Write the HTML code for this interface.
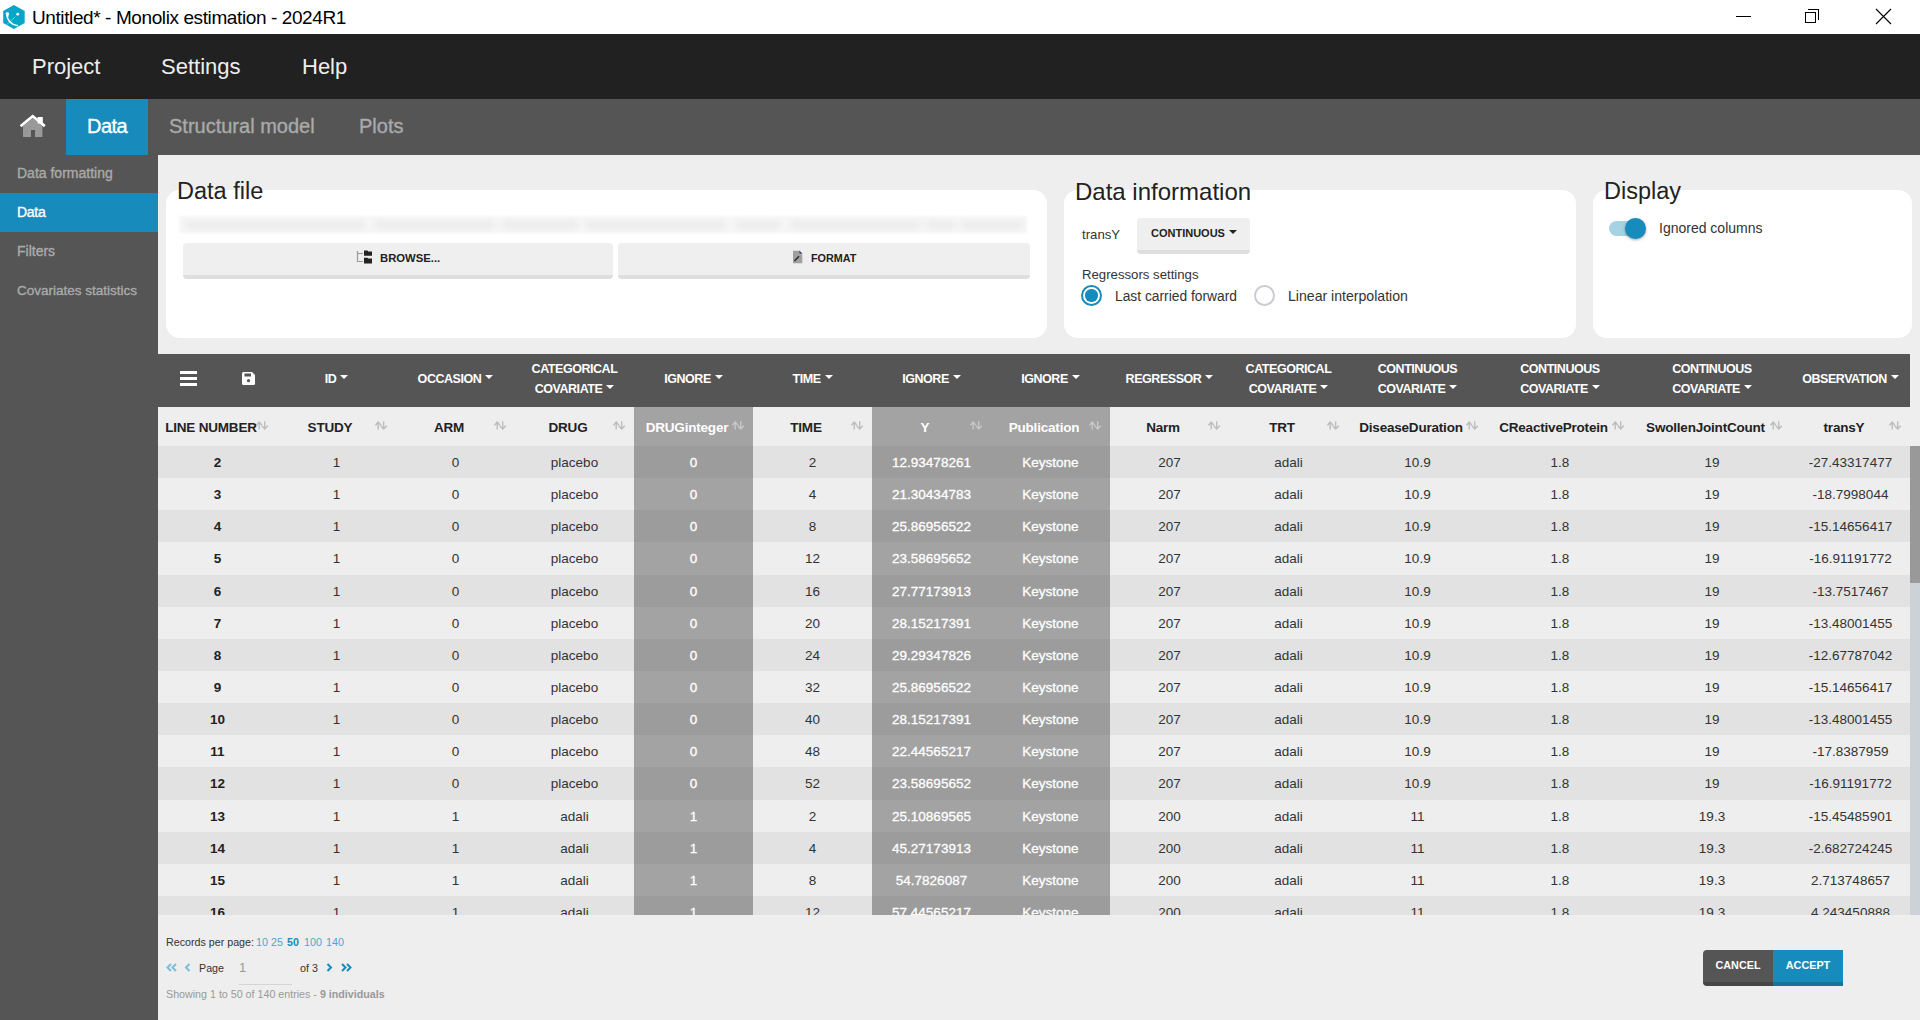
<!DOCTYPE html>
<html><head><meta charset="utf-8">
<style>
*{box-sizing:border-box;margin:0;padding:0}
html,body{width:1920px;height:1020px;overflow:hidden;background:#eeeeee;font-family:"Liberation Sans",sans-serif;position:relative}
.abs{position:absolute}
.sb{-webkit-text-stroke:0.35px currentColor}
.nw{white-space:nowrap}
#title{left:0;top:0;width:1920px;height:34px;background:#fff}
#menu{left:0;top:34px;width:1920px;height:65px;background:#212121}
#tabs{left:0;top:99px;width:1920px;height:56px;background:#555}
#side{left:0;top:155px;width:158px;height:865px;background:#555}
.card{background:#fff;border-radius:14px}
.h2{font-size:23.5px;color:#222;line-height:1;margin-top:1.5px}
.btn{background:#efefef;border-radius:4px;border-bottom:4px solid #dedede;font-weight:700;color:#222}
.td{font-size:13.5px;line-height:16px;text-align:center}
.th2{font-size:13.5px;font-weight:700;line-height:16px;text-align:center;letter-spacing:-0.2px}
.th1{font-size:12.5px;font-weight:700;line-height:14px;text-align:center;color:#fff;letter-spacing:-0.45px}
.car{display:inline-block;width:0;height:0;border-left:4px solid transparent;border-right:4px solid transparent;border-top:4px solid #fff;margin-left:4px;vertical-align:4px}
.ft{font-size:10.7px;line-height:14px}
.lk{color:#4aa8cf}

</style></head><body>
<!-- title bar -->
<div id="title" class="abs">
  <svg class="abs" style="left:3px;top:5px" width="22" height="24" viewBox="0 0 22 24">
    <polygon points="10.9,0 21.7,6.1 21.7,17.9 10.9,24 0.2,17.9 0.2,6.1" fill="#07a5c8"/>
    <path d="M3.6 7.8 Q4.2 19.2 15 20.8" stroke="#fff" stroke-width="1.5" fill="none"/>
    <path d="M2.6 8.6 Q4 6 6 8 L5.4 12 Z" fill="#fff"/>
    <line x1="4.4" y1="19" x2="12.4" y2="11.6" stroke="#fff" stroke-opacity="0.75" stroke-width="0.9" stroke-dasharray="1 0.6"/>
    <circle cx="14.7" cy="9.2" r="1.4" fill="#fff"/>
  </svg>
  <div class="abs nw" style="left:32px;top:7px;font-size:19px;letter-spacing:-0.4px;color:#000;line-height:22px">Untitled* - Monolix estimation - 2024R1</div>
  <div class="abs" style="left:1736px;top:16px;width:15px;height:1px;background:#000"></div>
  <div class="abs" style="left:1805px;top:12px;width:11px;height:11px;border:1px solid #000;background:#fff"></div>
  <div class="abs" style="left:1808px;top:9px;width:11px;height:11px;border-top:1px solid #000;border-right:1px solid #000"></div>
  <svg class="abs" style="left:1875px;top:8px" width="17" height="17" viewBox="0 0 17 17"><path d="M1 1L16 16M16 1L1 16" stroke="#000" stroke-width="1.1"/></svg>
</div>
<!-- menu -->
<div id="menu" class="abs">
  <div class="abs nw" style="left:32px;top:20px;font-size:22px;color:#eee;line-height:26px">Project</div>
  <div class="abs nw" style="left:161px;top:20px;font-size:22px;color:#eee;line-height:26px">Settings</div>
  <div class="abs nw" style="left:302px;top:20px;font-size:22px;color:#eee;line-height:26px">Help</div>
</div>
<!-- tabs -->
<div id="tabs" class="abs">
  <svg class="abs" style="left:20px;top:13.5px" width="26" height="26" viewBox="0 0 26 26">
    <path d="M3 13 L12.7 5.2 L22.4 13 V24 H15 V17 H11 V24 H3 Z" fill="#999"/>
    <rect x="17.6" y="4" width="5.2" height="6.5" fill="#fff"/>
    <path d="M1.6 12.3 L12.7 3.2 L23.8 12.3" stroke="#fff" stroke-width="2.6" fill="none" stroke-linecap="square"/>
  </svg>
  <div class="abs" style="left:66px;top:0;width:82px;height:56px;background:#178bbb"></div>
  <div class="abs nw sb" style="left:87px;top:15px;font-size:20px;letter-spacing:-0.5px;color:#fff;line-height:24px">Data</div>
  <div class="abs nw sb" style="left:169px;top:15px;font-size:20px;color:#aaa;line-height:24px">Structural model</div>
  <div class="abs nw sb" style="left:359px;top:15px;font-size:20px;color:#aaa;line-height:24px">Plots</div>
</div>
<!-- sidebar -->
<div id="side" class="abs">
  <div class="abs nw sb" style="left:17px;top:10px;font-size:14px;color:#aaa;line-height:17px">Data formatting</div>
  <div class="abs" style="left:0;top:38px;width:158px;height:39px;background:#178bbb"></div>
  <div class="abs nw sb" style="left:17px;top:49px;font-size:14px;letter-spacing:-0.3px;color:#fff;line-height:17px">Data</div>
  <div class="abs nw sb" style="left:17px;top:88px;font-size:14px;color:#aaa;line-height:17px">Filters</div>
  <div class="abs nw sb" style="left:17px;top:127px;font-size:13.5px;color:#aaa;line-height:17px">Covariates statistics</div>
</div>
<!-- CARDS -->
<div class="abs card" style="left:166px;top:190px;width:881px;height:148px"></div>
<div class="abs nw h2" style="left:177px;top:178px">Data file</div>
<!--FILEBAR-->
<div class="abs btn" style="left:183px;top:243px;width:430px;height:36px"></div>
<div class="abs btn" style="left:618px;top:243px;width:412px;height:36px"></div>

<div class="abs card" style="left:1064px;top:190px;width:512px;height:148px"></div>
<div class="abs nw h2" style="left:1075px;top:178px;font-size:24px">Data information</div>

<div class="abs card" style="left:1593px;top:190px;width:319px;height:148px"></div>
<div class="abs nw h2" style="left:1604px;top:178px">Display</div>



<div class="abs" style="left:179px;top:216px;width:848px;height:17px;background:#f7f7f7;filter:blur(0.8px)"></div>
<div class="abs" style="left:186px;top:221px;width:179px;height:8px;background:#ebebeb;filter:blur(3px)"></div>
<div class="abs" style="left:374px;top:221px;width:121px;height:8px;background:#ebebeb;filter:blur(3px)"></div>
<div class="abs" style="left:502px;top:221px;width:76px;height:8px;background:#ebebeb;filter:blur(3px)"></div>
<div class="abs" style="left:586px;top:221px;width:139px;height:8px;background:#ebebeb;filter:blur(3px)"></div>
<div class="abs" style="left:736px;top:221px;width:44px;height:8px;background:#ebebeb;filter:blur(3px)"></div>
<div class="abs" style="left:790px;top:221px;width:130px;height:8px;background:#ebebeb;filter:blur(3px)"></div>
<div class="abs" style="left:926px;top:221px;width:29px;height:8px;background:#ebebeb;filter:blur(3px)"></div>
<div class="abs" style="left:962px;top:221px;width:60px;height:8px;background:#ebebeb;filter:blur(3px)"></div>

<svg class="abs" style="left:356px;top:250px" width="17" height="15" viewBox="0 0 17 15">
 <path d="M1.5 1V11.5H7M1.5 3.5H7" stroke="#9a9a9a" stroke-width="1.2" fill="none"/>
 <path d="M8 0.6H11.5L12.2 1.4H16V5.8H8Z" fill="#222"/><path d="M8 7.8H11.5L12.2 8.6H16V13.4H8Z" fill="#222"/>
</svg>
<div class="abs nw" style="left:380px;top:252px;font-size:11.3px;font-weight:700;color:#222;line-height:13px">BROWSE...</div>
<svg class="abs" style="left:793px;top:250px" width="10" height="14" viewBox="0 0 10 14">
 <path d="M0 0.8H6.3V4.2H9.3V13.2H0Z" fill="#a0a0a0"/><path d="M6.3 0.5L9.5 3.8H6.3Z" fill="#3a2a50"/><path d="M1.5 11L6 6.2" stroke="#2a2a2a" stroke-width="1.5"/>
</svg>
<div class="abs nw" style="left:811px;top:252px;font-size:10.8px;font-weight:700;color:#222;line-height:13px">FORMAT</div>

<div class="abs nw" style="left:1082px;top:227px;font-size:13.2px;color:#333;line-height:16px">transY</div>
<div class="abs btn" style="left:1137px;top:218px;width:113px;height:36px;border-radius:4px"></div>
<div class="abs nw" style="left:1151px;top:227px;font-size:11px;font-weight:700;color:#222;line-height:13px">CONTINUOUS</div>
<div class="abs" style="left:1229px;top:230px;width:0;height:0;border-left:4px solid transparent;border-right:4px solid transparent;border-top:4px solid #222"></div>
<div class="abs nw" style="left:1082px;top:267px;font-size:13.2px;color:#333;line-height:16px">Regressors settings</div>
<div class="abs" style="left:1081px;top:285px;width:21px;height:21px;border-radius:50%;border:2.2px solid #178bbb;background:#fff"></div>
<div class="abs" style="left:1085.25px;top:289.25px;width:12.5px;height:12.5px;border-radius:50%;background:#178bbb"></div>
<div class="abs nw" style="left:1115px;top:288px;font-size:13.8px;color:#333;line-height:17px">Last carried forward</div>
<div class="abs" style="left:1254px;top:285px;width:21px;height:21px;border-radius:50%;border:2px solid #c8ccd2;background:#fff"></div>
<div class="abs nw" style="left:1288px;top:288px;font-size:14.1px;color:#333;line-height:17px">Linear interpolation</div>

<div class="abs" style="left:1609px;top:221px;width:30px;height:15px;border-radius:8px;background:#a6d3e3"></div>
<div class="abs" style="left:1625px;top:218px;width:21px;height:21px;border-radius:50%;background:#178bbb;box-shadow:0 1px 3px rgba(0,0,0,.35)"></div>
<div class="abs nw" style="left:1659px;top:220px;font-size:14px;color:#333;line-height:17px">Ignored columns</div>

<div class="abs" style="left:158px;top:354px;width:1752px;height:53px;background:#555"></div>
<div class="abs" style="left:158px;top:407px;width:1762px;height:39px;background:#eee"></div>
<div class="abs" style="left:158px;top:446px;width:1752px;height:469px;overflow:hidden">
<div class="abs" style="left:0;top:0.000px;width:1752px;height:32.143px;background:#e2e2e2"></div>
<div class="abs" style="left:0;top:32.143px;width:1752px;height:32.143px;background:#eeeeee"></div>
<div class="abs" style="left:0;top:64.286px;width:1752px;height:32.143px;background:#e2e2e2"></div>
<div class="abs" style="left:0;top:96.429px;width:1752px;height:32.143px;background:#eeeeee"></div>
<div class="abs" style="left:0;top:128.572px;width:1752px;height:32.143px;background:#e2e2e2"></div>
<div class="abs" style="left:0;top:160.715px;width:1752px;height:32.143px;background:#eeeeee"></div>
<div class="abs" style="left:0;top:192.858px;width:1752px;height:32.143px;background:#e2e2e2"></div>
<div class="abs" style="left:0;top:225.001px;width:1752px;height:32.143px;background:#eeeeee"></div>
<div class="abs" style="left:0;top:257.144px;width:1752px;height:32.143px;background:#e2e2e2"></div>
<div class="abs" style="left:0;top:289.287px;width:1752px;height:32.143px;background:#eeeeee"></div>
<div class="abs" style="left:0;top:321.430px;width:1752px;height:32.143px;background:#e2e2e2"></div>
<div class="abs" style="left:0;top:353.573px;width:1752px;height:32.143px;background:#eeeeee"></div>
<div class="abs" style="left:0;top:385.716px;width:1752px;height:32.143px;background:#e2e2e2"></div>
<div class="abs" style="left:0;top:417.859px;width:1752px;height:32.143px;background:#eeeeee"></div>
<div class="abs" style="left:0;top:450.002px;width:1752px;height:32.143px;background:#e2e2e2"></div>
<div class="abs" style="left:476px;top:0.000px;width:119px;height:32.143px;background:#9c9c9c"></div>
<div class="abs" style="left:476px;top:32.143px;width:119px;height:32.143px;background:#a3a3a3"></div>
<div class="abs" style="left:476px;top:64.286px;width:119px;height:32.143px;background:#9c9c9c"></div>
<div class="abs" style="left:476px;top:96.429px;width:119px;height:32.143px;background:#a3a3a3"></div>
<div class="abs" style="left:476px;top:128.572px;width:119px;height:32.143px;background:#9c9c9c"></div>
<div class="abs" style="left:476px;top:160.715px;width:119px;height:32.143px;background:#a3a3a3"></div>
<div class="abs" style="left:476px;top:192.858px;width:119px;height:32.143px;background:#9c9c9c"></div>
<div class="abs" style="left:476px;top:225.001px;width:119px;height:32.143px;background:#a3a3a3"></div>
<div class="abs" style="left:476px;top:257.144px;width:119px;height:32.143px;background:#9c9c9c"></div>
<div class="abs" style="left:476px;top:289.287px;width:119px;height:32.143px;background:#a3a3a3"></div>
<div class="abs" style="left:476px;top:321.430px;width:119px;height:32.143px;background:#9c9c9c"></div>
<div class="abs" style="left:476px;top:353.573px;width:119px;height:32.143px;background:#a3a3a3"></div>
<div class="abs" style="left:476px;top:385.716px;width:119px;height:32.143px;background:#9c9c9c"></div>
<div class="abs" style="left:476px;top:417.859px;width:119px;height:32.143px;background:#a3a3a3"></div>
<div class="abs" style="left:476px;top:450.002px;width:119px;height:32.143px;background:#9c9c9c"></div>
<div class="abs" style="left:714px;top:0.000px;width:119px;height:32.143px;background:#9c9c9c"></div>
<div class="abs" style="left:714px;top:32.143px;width:119px;height:32.143px;background:#a3a3a3"></div>
<div class="abs" style="left:714px;top:64.286px;width:119px;height:32.143px;background:#9c9c9c"></div>
<div class="abs" style="left:714px;top:96.429px;width:119px;height:32.143px;background:#a3a3a3"></div>
<div class="abs" style="left:714px;top:128.572px;width:119px;height:32.143px;background:#9c9c9c"></div>
<div class="abs" style="left:714px;top:160.715px;width:119px;height:32.143px;background:#a3a3a3"></div>
<div class="abs" style="left:714px;top:192.858px;width:119px;height:32.143px;background:#9c9c9c"></div>
<div class="abs" style="left:714px;top:225.001px;width:119px;height:32.143px;background:#a3a3a3"></div>
<div class="abs" style="left:714px;top:257.144px;width:119px;height:32.143px;background:#9c9c9c"></div>
<div class="abs" style="left:714px;top:289.287px;width:119px;height:32.143px;background:#a3a3a3"></div>
<div class="abs" style="left:714px;top:321.430px;width:119px;height:32.143px;background:#9c9c9c"></div>
<div class="abs" style="left:714px;top:353.573px;width:119px;height:32.143px;background:#a3a3a3"></div>
<div class="abs" style="left:714px;top:385.716px;width:119px;height:32.143px;background:#9c9c9c"></div>
<div class="abs" style="left:714px;top:417.859px;width:119px;height:32.143px;background:#a3a3a3"></div>
<div class="abs" style="left:714px;top:450.002px;width:119px;height:32.143px;background:#9c9c9c"></div>
<div class="abs" style="left:833px;top:0.000px;width:119px;height:32.143px;background:#9c9c9c"></div>
<div class="abs" style="left:833px;top:32.143px;width:119px;height:32.143px;background:#a3a3a3"></div>
<div class="abs" style="left:833px;top:64.286px;width:119px;height:32.143px;background:#9c9c9c"></div>
<div class="abs" style="left:833px;top:96.429px;width:119px;height:32.143px;background:#a3a3a3"></div>
<div class="abs" style="left:833px;top:128.572px;width:119px;height:32.143px;background:#9c9c9c"></div>
<div class="abs" style="left:833px;top:160.715px;width:119px;height:32.143px;background:#a3a3a3"></div>
<div class="abs" style="left:833px;top:192.858px;width:119px;height:32.143px;background:#9c9c9c"></div>
<div class="abs" style="left:833px;top:225.001px;width:119px;height:32.143px;background:#a3a3a3"></div>
<div class="abs" style="left:833px;top:257.144px;width:119px;height:32.143px;background:#9c9c9c"></div>
<div class="abs" style="left:833px;top:289.287px;width:119px;height:32.143px;background:#a3a3a3"></div>
<div class="abs" style="left:833px;top:321.430px;width:119px;height:32.143px;background:#9c9c9c"></div>
<div class="abs" style="left:833px;top:353.573px;width:119px;height:32.143px;background:#a3a3a3"></div>
<div class="abs" style="left:833px;top:385.716px;width:119px;height:32.143px;background:#9c9c9c"></div>
<div class="abs" style="left:833px;top:417.859px;width:119px;height:32.143px;background:#a3a3a3"></div>
<div class="abs" style="left:833px;top:450.002px;width:119px;height:32.143px;background:#9c9c9c"></div>
<div class="abs nw td" style="left:0px;top:9.000px;width:119px;color:#222;font-weight:700">2</div>
<div class="abs nw td" style="left:119px;top:9.000px;width:119px;color:#333;font-weight:400">1</div>
<div class="abs nw td" style="left:238px;top:9.000px;width:119px;color:#333;font-weight:400">0</div>
<div class="abs nw td" style="left:357px;top:9.000px;width:119px;color:#333;font-weight:400">placebo</div>
<div class="abs nw td" style="left:476px;top:9.000px;width:119px;color:#fff;font-weight:400;-webkit-text-stroke:0.3px #fff">0</div>
<div class="abs nw td" style="left:595px;top:9.000px;width:119px;color:#333;font-weight:400">2</div>
<div class="abs nw td" style="left:714px;top:9.000px;width:119px;color:#fff;font-weight:400;-webkit-text-stroke:0.3px #fff">12.93478261</div>
<div class="abs nw td" style="left:833px;top:9.000px;width:119px;color:#fff;font-weight:400;-webkit-text-stroke:0.3px #fff">Keystone</div>
<div class="abs nw td" style="left:952px;top:9.000px;width:119px;color:#333;font-weight:400">207</div>
<div class="abs nw td" style="left:1071px;top:9.000px;width:119px;color:#333;font-weight:400">adali</div>
<div class="abs nw td" style="left:1190px;top:9.000px;width:139px;color:#333;font-weight:400">10.9</div>
<div class="abs nw td" style="left:1329px;top:9.000px;width:146px;color:#333;font-weight:400">1.8</div>
<div class="abs nw td" style="left:1475px;top:9.000px;width:158px;color:#333;font-weight:400">19</div>
<div class="abs nw td" style="left:1633px;top:9.000px;width:119px;color:#333;font-weight:400">-27.43317477</div>
<div class="abs nw td" style="left:0px;top:41.143px;width:119px;color:#222;font-weight:700">3</div>
<div class="abs nw td" style="left:119px;top:41.143px;width:119px;color:#333;font-weight:400">1</div>
<div class="abs nw td" style="left:238px;top:41.143px;width:119px;color:#333;font-weight:400">0</div>
<div class="abs nw td" style="left:357px;top:41.143px;width:119px;color:#333;font-weight:400">placebo</div>
<div class="abs nw td" style="left:476px;top:41.143px;width:119px;color:#fff;font-weight:400;-webkit-text-stroke:0.3px #fff">0</div>
<div class="abs nw td" style="left:595px;top:41.143px;width:119px;color:#333;font-weight:400">4</div>
<div class="abs nw td" style="left:714px;top:41.143px;width:119px;color:#fff;font-weight:400;-webkit-text-stroke:0.3px #fff">21.30434783</div>
<div class="abs nw td" style="left:833px;top:41.143px;width:119px;color:#fff;font-weight:400;-webkit-text-stroke:0.3px #fff">Keystone</div>
<div class="abs nw td" style="left:952px;top:41.143px;width:119px;color:#333;font-weight:400">207</div>
<div class="abs nw td" style="left:1071px;top:41.143px;width:119px;color:#333;font-weight:400">adali</div>
<div class="abs nw td" style="left:1190px;top:41.143px;width:139px;color:#333;font-weight:400">10.9</div>
<div class="abs nw td" style="left:1329px;top:41.143px;width:146px;color:#333;font-weight:400">1.8</div>
<div class="abs nw td" style="left:1475px;top:41.143px;width:158px;color:#333;font-weight:400">19</div>
<div class="abs nw td" style="left:1633px;top:41.143px;width:119px;color:#333;font-weight:400">-18.7998044</div>
<div class="abs nw td" style="left:0px;top:73.286px;width:119px;color:#222;font-weight:700">4</div>
<div class="abs nw td" style="left:119px;top:73.286px;width:119px;color:#333;font-weight:400">1</div>
<div class="abs nw td" style="left:238px;top:73.286px;width:119px;color:#333;font-weight:400">0</div>
<div class="abs nw td" style="left:357px;top:73.286px;width:119px;color:#333;font-weight:400">placebo</div>
<div class="abs nw td" style="left:476px;top:73.286px;width:119px;color:#fff;font-weight:400;-webkit-text-stroke:0.3px #fff">0</div>
<div class="abs nw td" style="left:595px;top:73.286px;width:119px;color:#333;font-weight:400">8</div>
<div class="abs nw td" style="left:714px;top:73.286px;width:119px;color:#fff;font-weight:400;-webkit-text-stroke:0.3px #fff">25.86956522</div>
<div class="abs nw td" style="left:833px;top:73.286px;width:119px;color:#fff;font-weight:400;-webkit-text-stroke:0.3px #fff">Keystone</div>
<div class="abs nw td" style="left:952px;top:73.286px;width:119px;color:#333;font-weight:400">207</div>
<div class="abs nw td" style="left:1071px;top:73.286px;width:119px;color:#333;font-weight:400">adali</div>
<div class="abs nw td" style="left:1190px;top:73.286px;width:139px;color:#333;font-weight:400">10.9</div>
<div class="abs nw td" style="left:1329px;top:73.286px;width:146px;color:#333;font-weight:400">1.8</div>
<div class="abs nw td" style="left:1475px;top:73.286px;width:158px;color:#333;font-weight:400">19</div>
<div class="abs nw td" style="left:1633px;top:73.286px;width:119px;color:#333;font-weight:400">-15.14656417</div>
<div class="abs nw td" style="left:0px;top:105.429px;width:119px;color:#222;font-weight:700">5</div>
<div class="abs nw td" style="left:119px;top:105.429px;width:119px;color:#333;font-weight:400">1</div>
<div class="abs nw td" style="left:238px;top:105.429px;width:119px;color:#333;font-weight:400">0</div>
<div class="abs nw td" style="left:357px;top:105.429px;width:119px;color:#333;font-weight:400">placebo</div>
<div class="abs nw td" style="left:476px;top:105.429px;width:119px;color:#fff;font-weight:400;-webkit-text-stroke:0.3px #fff">0</div>
<div class="abs nw td" style="left:595px;top:105.429px;width:119px;color:#333;font-weight:400">12</div>
<div class="abs nw td" style="left:714px;top:105.429px;width:119px;color:#fff;font-weight:400;-webkit-text-stroke:0.3px #fff">23.58695652</div>
<div class="abs nw td" style="left:833px;top:105.429px;width:119px;color:#fff;font-weight:400;-webkit-text-stroke:0.3px #fff">Keystone</div>
<div class="abs nw td" style="left:952px;top:105.429px;width:119px;color:#333;font-weight:400">207</div>
<div class="abs nw td" style="left:1071px;top:105.429px;width:119px;color:#333;font-weight:400">adali</div>
<div class="abs nw td" style="left:1190px;top:105.429px;width:139px;color:#333;font-weight:400">10.9</div>
<div class="abs nw td" style="left:1329px;top:105.429px;width:146px;color:#333;font-weight:400">1.8</div>
<div class="abs nw td" style="left:1475px;top:105.429px;width:158px;color:#333;font-weight:400">19</div>
<div class="abs nw td" style="left:1633px;top:105.429px;width:119px;color:#333;font-weight:400">-16.91191772</div>
<div class="abs nw td" style="left:0px;top:137.572px;width:119px;color:#222;font-weight:700">6</div>
<div class="abs nw td" style="left:119px;top:137.572px;width:119px;color:#333;font-weight:400">1</div>
<div class="abs nw td" style="left:238px;top:137.572px;width:119px;color:#333;font-weight:400">0</div>
<div class="abs nw td" style="left:357px;top:137.572px;width:119px;color:#333;font-weight:400">placebo</div>
<div class="abs nw td" style="left:476px;top:137.572px;width:119px;color:#fff;font-weight:400;-webkit-text-stroke:0.3px #fff">0</div>
<div class="abs nw td" style="left:595px;top:137.572px;width:119px;color:#333;font-weight:400">16</div>
<div class="abs nw td" style="left:714px;top:137.572px;width:119px;color:#fff;font-weight:400;-webkit-text-stroke:0.3px #fff">27.77173913</div>
<div class="abs nw td" style="left:833px;top:137.572px;width:119px;color:#fff;font-weight:400;-webkit-text-stroke:0.3px #fff">Keystone</div>
<div class="abs nw td" style="left:952px;top:137.572px;width:119px;color:#333;font-weight:400">207</div>
<div class="abs nw td" style="left:1071px;top:137.572px;width:119px;color:#333;font-weight:400">adali</div>
<div class="abs nw td" style="left:1190px;top:137.572px;width:139px;color:#333;font-weight:400">10.9</div>
<div class="abs nw td" style="left:1329px;top:137.572px;width:146px;color:#333;font-weight:400">1.8</div>
<div class="abs nw td" style="left:1475px;top:137.572px;width:158px;color:#333;font-weight:400">19</div>
<div class="abs nw td" style="left:1633px;top:137.572px;width:119px;color:#333;font-weight:400">-13.7517467</div>
<div class="abs nw td" style="left:0px;top:169.715px;width:119px;color:#222;font-weight:700">7</div>
<div class="abs nw td" style="left:119px;top:169.715px;width:119px;color:#333;font-weight:400">1</div>
<div class="abs nw td" style="left:238px;top:169.715px;width:119px;color:#333;font-weight:400">0</div>
<div class="abs nw td" style="left:357px;top:169.715px;width:119px;color:#333;font-weight:400">placebo</div>
<div class="abs nw td" style="left:476px;top:169.715px;width:119px;color:#fff;font-weight:400;-webkit-text-stroke:0.3px #fff">0</div>
<div class="abs nw td" style="left:595px;top:169.715px;width:119px;color:#333;font-weight:400">20</div>
<div class="abs nw td" style="left:714px;top:169.715px;width:119px;color:#fff;font-weight:400;-webkit-text-stroke:0.3px #fff">28.15217391</div>
<div class="abs nw td" style="left:833px;top:169.715px;width:119px;color:#fff;font-weight:400;-webkit-text-stroke:0.3px #fff">Keystone</div>
<div class="abs nw td" style="left:952px;top:169.715px;width:119px;color:#333;font-weight:400">207</div>
<div class="abs nw td" style="left:1071px;top:169.715px;width:119px;color:#333;font-weight:400">adali</div>
<div class="abs nw td" style="left:1190px;top:169.715px;width:139px;color:#333;font-weight:400">10.9</div>
<div class="abs nw td" style="left:1329px;top:169.715px;width:146px;color:#333;font-weight:400">1.8</div>
<div class="abs nw td" style="left:1475px;top:169.715px;width:158px;color:#333;font-weight:400">19</div>
<div class="abs nw td" style="left:1633px;top:169.715px;width:119px;color:#333;font-weight:400">-13.48001455</div>
<div class="abs nw td" style="left:0px;top:201.858px;width:119px;color:#222;font-weight:700">8</div>
<div class="abs nw td" style="left:119px;top:201.858px;width:119px;color:#333;font-weight:400">1</div>
<div class="abs nw td" style="left:238px;top:201.858px;width:119px;color:#333;font-weight:400">0</div>
<div class="abs nw td" style="left:357px;top:201.858px;width:119px;color:#333;font-weight:400">placebo</div>
<div class="abs nw td" style="left:476px;top:201.858px;width:119px;color:#fff;font-weight:400;-webkit-text-stroke:0.3px #fff">0</div>
<div class="abs nw td" style="left:595px;top:201.858px;width:119px;color:#333;font-weight:400">24</div>
<div class="abs nw td" style="left:714px;top:201.858px;width:119px;color:#fff;font-weight:400;-webkit-text-stroke:0.3px #fff">29.29347826</div>
<div class="abs nw td" style="left:833px;top:201.858px;width:119px;color:#fff;font-weight:400;-webkit-text-stroke:0.3px #fff">Keystone</div>
<div class="abs nw td" style="left:952px;top:201.858px;width:119px;color:#333;font-weight:400">207</div>
<div class="abs nw td" style="left:1071px;top:201.858px;width:119px;color:#333;font-weight:400">adali</div>
<div class="abs nw td" style="left:1190px;top:201.858px;width:139px;color:#333;font-weight:400">10.9</div>
<div class="abs nw td" style="left:1329px;top:201.858px;width:146px;color:#333;font-weight:400">1.8</div>
<div class="abs nw td" style="left:1475px;top:201.858px;width:158px;color:#333;font-weight:400">19</div>
<div class="abs nw td" style="left:1633px;top:201.858px;width:119px;color:#333;font-weight:400">-12.67787042</div>
<div class="abs nw td" style="left:0px;top:234.001px;width:119px;color:#222;font-weight:700">9</div>
<div class="abs nw td" style="left:119px;top:234.001px;width:119px;color:#333;font-weight:400">1</div>
<div class="abs nw td" style="left:238px;top:234.001px;width:119px;color:#333;font-weight:400">0</div>
<div class="abs nw td" style="left:357px;top:234.001px;width:119px;color:#333;font-weight:400">placebo</div>
<div class="abs nw td" style="left:476px;top:234.001px;width:119px;color:#fff;font-weight:400;-webkit-text-stroke:0.3px #fff">0</div>
<div class="abs nw td" style="left:595px;top:234.001px;width:119px;color:#333;font-weight:400">32</div>
<div class="abs nw td" style="left:714px;top:234.001px;width:119px;color:#fff;font-weight:400;-webkit-text-stroke:0.3px #fff">25.86956522</div>
<div class="abs nw td" style="left:833px;top:234.001px;width:119px;color:#fff;font-weight:400;-webkit-text-stroke:0.3px #fff">Keystone</div>
<div class="abs nw td" style="left:952px;top:234.001px;width:119px;color:#333;font-weight:400">207</div>
<div class="abs nw td" style="left:1071px;top:234.001px;width:119px;color:#333;font-weight:400">adali</div>
<div class="abs nw td" style="left:1190px;top:234.001px;width:139px;color:#333;font-weight:400">10.9</div>
<div class="abs nw td" style="left:1329px;top:234.001px;width:146px;color:#333;font-weight:400">1.8</div>
<div class="abs nw td" style="left:1475px;top:234.001px;width:158px;color:#333;font-weight:400">19</div>
<div class="abs nw td" style="left:1633px;top:234.001px;width:119px;color:#333;font-weight:400">-15.14656417</div>
<div class="abs nw td" style="left:0px;top:266.144px;width:119px;color:#222;font-weight:700">10</div>
<div class="abs nw td" style="left:119px;top:266.144px;width:119px;color:#333;font-weight:400">1</div>
<div class="abs nw td" style="left:238px;top:266.144px;width:119px;color:#333;font-weight:400">0</div>
<div class="abs nw td" style="left:357px;top:266.144px;width:119px;color:#333;font-weight:400">placebo</div>
<div class="abs nw td" style="left:476px;top:266.144px;width:119px;color:#fff;font-weight:400;-webkit-text-stroke:0.3px #fff">0</div>
<div class="abs nw td" style="left:595px;top:266.144px;width:119px;color:#333;font-weight:400">40</div>
<div class="abs nw td" style="left:714px;top:266.144px;width:119px;color:#fff;font-weight:400;-webkit-text-stroke:0.3px #fff">28.15217391</div>
<div class="abs nw td" style="left:833px;top:266.144px;width:119px;color:#fff;font-weight:400;-webkit-text-stroke:0.3px #fff">Keystone</div>
<div class="abs nw td" style="left:952px;top:266.144px;width:119px;color:#333;font-weight:400">207</div>
<div class="abs nw td" style="left:1071px;top:266.144px;width:119px;color:#333;font-weight:400">adali</div>
<div class="abs nw td" style="left:1190px;top:266.144px;width:139px;color:#333;font-weight:400">10.9</div>
<div class="abs nw td" style="left:1329px;top:266.144px;width:146px;color:#333;font-weight:400">1.8</div>
<div class="abs nw td" style="left:1475px;top:266.144px;width:158px;color:#333;font-weight:400">19</div>
<div class="abs nw td" style="left:1633px;top:266.144px;width:119px;color:#333;font-weight:400">-13.48001455</div>
<div class="abs nw td" style="left:0px;top:298.287px;width:119px;color:#222;font-weight:700">11</div>
<div class="abs nw td" style="left:119px;top:298.287px;width:119px;color:#333;font-weight:400">1</div>
<div class="abs nw td" style="left:238px;top:298.287px;width:119px;color:#333;font-weight:400">0</div>
<div class="abs nw td" style="left:357px;top:298.287px;width:119px;color:#333;font-weight:400">placebo</div>
<div class="abs nw td" style="left:476px;top:298.287px;width:119px;color:#fff;font-weight:400;-webkit-text-stroke:0.3px #fff">0</div>
<div class="abs nw td" style="left:595px;top:298.287px;width:119px;color:#333;font-weight:400">48</div>
<div class="abs nw td" style="left:714px;top:298.287px;width:119px;color:#fff;font-weight:400;-webkit-text-stroke:0.3px #fff">22.44565217</div>
<div class="abs nw td" style="left:833px;top:298.287px;width:119px;color:#fff;font-weight:400;-webkit-text-stroke:0.3px #fff">Keystone</div>
<div class="abs nw td" style="left:952px;top:298.287px;width:119px;color:#333;font-weight:400">207</div>
<div class="abs nw td" style="left:1071px;top:298.287px;width:119px;color:#333;font-weight:400">adali</div>
<div class="abs nw td" style="left:1190px;top:298.287px;width:139px;color:#333;font-weight:400">10.9</div>
<div class="abs nw td" style="left:1329px;top:298.287px;width:146px;color:#333;font-weight:400">1.8</div>
<div class="abs nw td" style="left:1475px;top:298.287px;width:158px;color:#333;font-weight:400">19</div>
<div class="abs nw td" style="left:1633px;top:298.287px;width:119px;color:#333;font-weight:400">-17.8387959</div>
<div class="abs nw td" style="left:0px;top:330.430px;width:119px;color:#222;font-weight:700">12</div>
<div class="abs nw td" style="left:119px;top:330.430px;width:119px;color:#333;font-weight:400">1</div>
<div class="abs nw td" style="left:238px;top:330.430px;width:119px;color:#333;font-weight:400">0</div>
<div class="abs nw td" style="left:357px;top:330.430px;width:119px;color:#333;font-weight:400">placebo</div>
<div class="abs nw td" style="left:476px;top:330.430px;width:119px;color:#fff;font-weight:400;-webkit-text-stroke:0.3px #fff">0</div>
<div class="abs nw td" style="left:595px;top:330.430px;width:119px;color:#333;font-weight:400">52</div>
<div class="abs nw td" style="left:714px;top:330.430px;width:119px;color:#fff;font-weight:400;-webkit-text-stroke:0.3px #fff">23.58695652</div>
<div class="abs nw td" style="left:833px;top:330.430px;width:119px;color:#fff;font-weight:400;-webkit-text-stroke:0.3px #fff">Keystone</div>
<div class="abs nw td" style="left:952px;top:330.430px;width:119px;color:#333;font-weight:400">207</div>
<div class="abs nw td" style="left:1071px;top:330.430px;width:119px;color:#333;font-weight:400">adali</div>
<div class="abs nw td" style="left:1190px;top:330.430px;width:139px;color:#333;font-weight:400">10.9</div>
<div class="abs nw td" style="left:1329px;top:330.430px;width:146px;color:#333;font-weight:400">1.8</div>
<div class="abs nw td" style="left:1475px;top:330.430px;width:158px;color:#333;font-weight:400">19</div>
<div class="abs nw td" style="left:1633px;top:330.430px;width:119px;color:#333;font-weight:400">-16.91191772</div>
<div class="abs nw td" style="left:0px;top:362.573px;width:119px;color:#222;font-weight:700">13</div>
<div class="abs nw td" style="left:119px;top:362.573px;width:119px;color:#333;font-weight:400">1</div>
<div class="abs nw td" style="left:238px;top:362.573px;width:119px;color:#333;font-weight:400">1</div>
<div class="abs nw td" style="left:357px;top:362.573px;width:119px;color:#333;font-weight:400">adali</div>
<div class="abs nw td" style="left:476px;top:362.573px;width:119px;color:#fff;font-weight:400;-webkit-text-stroke:0.3px #fff">1</div>
<div class="abs nw td" style="left:595px;top:362.573px;width:119px;color:#333;font-weight:400">2</div>
<div class="abs nw td" style="left:714px;top:362.573px;width:119px;color:#fff;font-weight:400;-webkit-text-stroke:0.3px #fff">25.10869565</div>
<div class="abs nw td" style="left:833px;top:362.573px;width:119px;color:#fff;font-weight:400;-webkit-text-stroke:0.3px #fff">Keystone</div>
<div class="abs nw td" style="left:952px;top:362.573px;width:119px;color:#333;font-weight:400">200</div>
<div class="abs nw td" style="left:1071px;top:362.573px;width:119px;color:#333;font-weight:400">adali</div>
<div class="abs nw td" style="left:1190px;top:362.573px;width:139px;color:#333;font-weight:400">11</div>
<div class="abs nw td" style="left:1329px;top:362.573px;width:146px;color:#333;font-weight:400">1.8</div>
<div class="abs nw td" style="left:1475px;top:362.573px;width:158px;color:#333;font-weight:400">19.3</div>
<div class="abs nw td" style="left:1633px;top:362.573px;width:119px;color:#333;font-weight:400">-15.45485901</div>
<div class="abs nw td" style="left:0px;top:394.716px;width:119px;color:#222;font-weight:700">14</div>
<div class="abs nw td" style="left:119px;top:394.716px;width:119px;color:#333;font-weight:400">1</div>
<div class="abs nw td" style="left:238px;top:394.716px;width:119px;color:#333;font-weight:400">1</div>
<div class="abs nw td" style="left:357px;top:394.716px;width:119px;color:#333;font-weight:400">adali</div>
<div class="abs nw td" style="left:476px;top:394.716px;width:119px;color:#fff;font-weight:400;-webkit-text-stroke:0.3px #fff">1</div>
<div class="abs nw td" style="left:595px;top:394.716px;width:119px;color:#333;font-weight:400">4</div>
<div class="abs nw td" style="left:714px;top:394.716px;width:119px;color:#fff;font-weight:400;-webkit-text-stroke:0.3px #fff">45.27173913</div>
<div class="abs nw td" style="left:833px;top:394.716px;width:119px;color:#fff;font-weight:400;-webkit-text-stroke:0.3px #fff">Keystone</div>
<div class="abs nw td" style="left:952px;top:394.716px;width:119px;color:#333;font-weight:400">200</div>
<div class="abs nw td" style="left:1071px;top:394.716px;width:119px;color:#333;font-weight:400">adali</div>
<div class="abs nw td" style="left:1190px;top:394.716px;width:139px;color:#333;font-weight:400">11</div>
<div class="abs nw td" style="left:1329px;top:394.716px;width:146px;color:#333;font-weight:400">1.8</div>
<div class="abs nw td" style="left:1475px;top:394.716px;width:158px;color:#333;font-weight:400">19.3</div>
<div class="abs nw td" style="left:1633px;top:394.716px;width:119px;color:#333;font-weight:400">-2.682724245</div>
<div class="abs nw td" style="left:0px;top:426.859px;width:119px;color:#222;font-weight:700">15</div>
<div class="abs nw td" style="left:119px;top:426.859px;width:119px;color:#333;font-weight:400">1</div>
<div class="abs nw td" style="left:238px;top:426.859px;width:119px;color:#333;font-weight:400">1</div>
<div class="abs nw td" style="left:357px;top:426.859px;width:119px;color:#333;font-weight:400">adali</div>
<div class="abs nw td" style="left:476px;top:426.859px;width:119px;color:#fff;font-weight:400;-webkit-text-stroke:0.3px #fff">1</div>
<div class="abs nw td" style="left:595px;top:426.859px;width:119px;color:#333;font-weight:400">8</div>
<div class="abs nw td" style="left:714px;top:426.859px;width:119px;color:#fff;font-weight:400;-webkit-text-stroke:0.3px #fff">54.7826087</div>
<div class="abs nw td" style="left:833px;top:426.859px;width:119px;color:#fff;font-weight:400;-webkit-text-stroke:0.3px #fff">Keystone</div>
<div class="abs nw td" style="left:952px;top:426.859px;width:119px;color:#333;font-weight:400">200</div>
<div class="abs nw td" style="left:1071px;top:426.859px;width:119px;color:#333;font-weight:400">adali</div>
<div class="abs nw td" style="left:1190px;top:426.859px;width:139px;color:#333;font-weight:400">11</div>
<div class="abs nw td" style="left:1329px;top:426.859px;width:146px;color:#333;font-weight:400">1.8</div>
<div class="abs nw td" style="left:1475px;top:426.859px;width:158px;color:#333;font-weight:400">19.3</div>
<div class="abs nw td" style="left:1633px;top:426.859px;width:119px;color:#333;font-weight:400">2.713748657</div>
<div class="abs nw td" style="left:0px;top:459.002px;width:119px;color:#222;font-weight:700">16</div>
<div class="abs nw td" style="left:119px;top:459.002px;width:119px;color:#333;font-weight:400">1</div>
<div class="abs nw td" style="left:238px;top:459.002px;width:119px;color:#333;font-weight:400">1</div>
<div class="abs nw td" style="left:357px;top:459.002px;width:119px;color:#333;font-weight:400">adali</div>
<div class="abs nw td" style="left:476px;top:459.002px;width:119px;color:#fff;font-weight:400;-webkit-text-stroke:0.3px #fff">1</div>
<div class="abs nw td" style="left:595px;top:459.002px;width:119px;color:#333;font-weight:400">12</div>
<div class="abs nw td" style="left:714px;top:459.002px;width:119px;color:#fff;font-weight:400;-webkit-text-stroke:0.3px #fff">57.44565217</div>
<div class="abs nw td" style="left:833px;top:459.002px;width:119px;color:#fff;font-weight:400;-webkit-text-stroke:0.3px #fff">Keystone</div>
<div class="abs nw td" style="left:952px;top:459.002px;width:119px;color:#333;font-weight:400">200</div>
<div class="abs nw td" style="left:1071px;top:459.002px;width:119px;color:#333;font-weight:400">adali</div>
<div class="abs nw td" style="left:1190px;top:459.002px;width:139px;color:#333;font-weight:400">11</div>
<div class="abs nw td" style="left:1329px;top:459.002px;width:146px;color:#333;font-weight:400">1.8</div>
<div class="abs nw td" style="left:1475px;top:459.002px;width:158px;color:#333;font-weight:400">19.3</div>
<div class="abs nw td" style="left:1633px;top:459.002px;width:119px;color:#333;font-weight:400">4.243450888</div>
</div>
<div class="abs" style="left:634px;top:407px;width:119px;height:39px;background:#a3a3a3"></div>
<div class="abs" style="left:872px;top:407px;width:119px;height:39px;background:#a3a3a3"></div>
<div class="abs" style="left:991px;top:407px;width:119px;height:39px;background:#a3a3a3"></div>
<div class="abs nw th2" style="left:158px;top:419.5px;width:106px;color:#222">LINE NUMBER</div>
<svg class="abs" style="left:256px;top:420.5px" width="13" height="9" viewBox="0 0 13 9"><path d="M3.2 8.5V1M0.5 4.3L3.2 1L5.9 4.3M8.7 0.3V8M5.8 4.8L8.7 8L11.8 4.8" stroke="#bdbdbd" stroke-width="1.4" fill="none"/></svg>
<div class="abs nw th2" style="left:277px;top:419.5px;width:106px;color:#222">STUDY</div>
<svg class="abs" style="left:375px;top:420.5px" width="13" height="9" viewBox="0 0 13 9"><path d="M3.2 8.5V1M0.5 4.3L3.2 1L5.9 4.3M8.7 0.3V8M5.8 4.8L8.7 8L11.8 4.8" stroke="#bdbdbd" stroke-width="1.4" fill="none"/></svg>
<div class="abs nw th2" style="left:396px;top:419.5px;width:106px;color:#222">ARM</div>
<svg class="abs" style="left:494px;top:420.5px" width="13" height="9" viewBox="0 0 13 9"><path d="M3.2 8.5V1M0.5 4.3L3.2 1L5.9 4.3M8.7 0.3V8M5.8 4.8L8.7 8L11.8 4.8" stroke="#bdbdbd" stroke-width="1.4" fill="none"/></svg>
<div class="abs nw th2" style="left:515px;top:419.5px;width:106px;color:#222">DRUG</div>
<svg class="abs" style="left:613px;top:420.5px" width="13" height="9" viewBox="0 0 13 9"><path d="M3.2 8.5V1M0.5 4.3L3.2 1L5.9 4.3M8.7 0.3V8M5.8 4.8L8.7 8L11.8 4.8" stroke="#bdbdbd" stroke-width="1.4" fill="none"/></svg>
<div class="abs nw th2" style="left:634px;top:419.5px;width:106px;color:#fff">DRUGinteger</div>
<svg class="abs" style="left:732px;top:420.5px" width="13" height="9" viewBox="0 0 13 9"><path d="M3.2 8.5V1M0.5 4.3L3.2 1L5.9 4.3M8.7 0.3V8M5.8 4.8L8.7 8L11.8 4.8" stroke="#c8c8c8" stroke-width="1.4" fill="none"/></svg>
<div class="abs nw th2" style="left:753px;top:419.5px;width:106px;color:#222">TIME</div>
<svg class="abs" style="left:851px;top:420.5px" width="13" height="9" viewBox="0 0 13 9"><path d="M3.2 8.5V1M0.5 4.3L3.2 1L5.9 4.3M8.7 0.3V8M5.8 4.8L8.7 8L11.8 4.8" stroke="#bdbdbd" stroke-width="1.4" fill="none"/></svg>
<div class="abs nw th2" style="left:872px;top:419.5px;width:106px;color:#fff">Y</div>
<svg class="abs" style="left:970px;top:420.5px" width="13" height="9" viewBox="0 0 13 9"><path d="M3.2 8.5V1M0.5 4.3L3.2 1L5.9 4.3M8.7 0.3V8M5.8 4.8L8.7 8L11.8 4.8" stroke="#c8c8c8" stroke-width="1.4" fill="none"/></svg>
<div class="abs nw th2" style="left:991px;top:419.5px;width:106px;color:#fff">Publication</div>
<svg class="abs" style="left:1089px;top:420.5px" width="13" height="9" viewBox="0 0 13 9"><path d="M3.2 8.5V1M0.5 4.3L3.2 1L5.9 4.3M8.7 0.3V8M5.8 4.8L8.7 8L11.8 4.8" stroke="#c8c8c8" stroke-width="1.4" fill="none"/></svg>
<div class="abs nw th2" style="left:1110px;top:419.5px;width:106px;color:#222">Narm</div>
<svg class="abs" style="left:1208px;top:420.5px" width="13" height="9" viewBox="0 0 13 9"><path d="M3.2 8.5V1M0.5 4.3L3.2 1L5.9 4.3M8.7 0.3V8M5.8 4.8L8.7 8L11.8 4.8" stroke="#bdbdbd" stroke-width="1.4" fill="none"/></svg>
<div class="abs nw th2" style="left:1229px;top:419.5px;width:106px;color:#222">TRT</div>
<svg class="abs" style="left:1327px;top:420.5px" width="13" height="9" viewBox="0 0 13 9"><path d="M3.2 8.5V1M0.5 4.3L3.2 1L5.9 4.3M8.7 0.3V8M5.8 4.8L8.7 8L11.8 4.8" stroke="#bdbdbd" stroke-width="1.4" fill="none"/></svg>
<div class="abs nw th2" style="left:1348px;top:419.5px;width:126px;color:#222">DiseaseDuration</div>
<svg class="abs" style="left:1466px;top:420.5px" width="13" height="9" viewBox="0 0 13 9"><path d="M3.2 8.5V1M0.5 4.3L3.2 1L5.9 4.3M8.7 0.3V8M5.8 4.8L8.7 8L11.8 4.8" stroke="#bdbdbd" stroke-width="1.4" fill="none"/></svg>
<div class="abs nw th2" style="left:1487px;top:419.5px;width:133px;color:#222">CReactiveProtein</div>
<svg class="abs" style="left:1612px;top:420.5px" width="13" height="9" viewBox="0 0 13 9"><path d="M3.2 8.5V1M0.5 4.3L3.2 1L5.9 4.3M8.7 0.3V8M5.8 4.8L8.7 8L11.8 4.8" stroke="#bdbdbd" stroke-width="1.4" fill="none"/></svg>
<div class="abs nw th2" style="left:1633px;top:419.5px;width:145px;color:#222">SwollenJointCount</div>
<svg class="abs" style="left:1770px;top:420.5px" width="13" height="9" viewBox="0 0 13 9"><path d="M3.2 8.5V1M0.5 4.3L3.2 1L5.9 4.3M8.7 0.3V8M5.8 4.8L8.7 8L11.8 4.8" stroke="#bdbdbd" stroke-width="1.4" fill="none"/></svg>
<div class="abs nw th2" style="left:1791px;top:419.5px;width:106px;color:#222">transY</div>
<svg class="abs" style="left:1889px;top:420.5px" width="13" height="9" viewBox="0 0 13 9"><path d="M3.2 8.5V1M0.5 4.3L3.2 1L5.9 4.3M8.7 0.3V8M5.8 4.8L8.7 8L11.8 4.8" stroke="#bdbdbd" stroke-width="1.4" fill="none"/></svg>
<div class="abs nw th1" style="left:277px;top:372px;width:119px">ID<span class="car"></span></div>
<div class="abs nw th1" style="left:396px;top:372px;width:119px">OCCASION<span class="car"></span></div>
<div class="abs nw th1" style="left:515px;top:362px;width:119px">CATEGORICAL</div>
<div class="abs nw th1" style="left:515px;top:382px;width:119px">COVARIATE<span class="car"></span></div>
<div class="abs nw th1" style="left:634px;top:372px;width:119px">IGNORE<span class="car"></span></div>
<div class="abs nw th1" style="left:753px;top:372px;width:119px">TIME<span class="car"></span></div>
<div class="abs nw th1" style="left:872px;top:372px;width:119px">IGNORE<span class="car"></span></div>
<div class="abs nw th1" style="left:991px;top:372px;width:119px">IGNORE<span class="car"></span></div>
<div class="abs nw th1" style="left:1110px;top:372px;width:119px">REGRESSOR<span class="car"></span></div>
<div class="abs nw th1" style="left:1229px;top:362px;width:119px">CATEGORICAL</div>
<div class="abs nw th1" style="left:1229px;top:382px;width:119px">COVARIATE<span class="car"></span></div>
<div class="abs nw th1" style="left:1348px;top:362px;width:139px">CONTINUOUS</div>
<div class="abs nw th1" style="left:1348px;top:382px;width:139px">COVARIATE<span class="car"></span></div>
<div class="abs nw th1" style="left:1487px;top:362px;width:146px">CONTINUOUS</div>
<div class="abs nw th1" style="left:1487px;top:382px;width:146px">COVARIATE<span class="car"></span></div>
<div class="abs nw th1" style="left:1633px;top:362px;width:158px">CONTINUOUS</div>
<div class="abs nw th1" style="left:1633px;top:382px;width:158px">COVARIATE<span class="car"></span></div>
<div class="abs nw th1" style="left:1791px;top:372px;width:119px">OBSERVATION<span class="car"></span></div>
<div class="abs" style="left:180px;top:371px;width:17px;height:3px;background:#fff;box-shadow:0 6px 0 #fff,0 12px 0 #fff"></div>
<svg class="abs" style="left:242px;top:372px" width="13" height="13" viewBox="0 0 13 13"><path d="M0 1.5Q0 0 1.5 0H10L13 3V11.5Q13 13 11.5 13H1.5Q0 13 0 11.5Z" fill="#fff"/><rect x="2.5" y="1.5" width="6.5" height="3" fill="#555"/><circle cx="6.5" cy="8.7" r="1.6" fill="#555"/></svg>
<div class="abs" style="left:1910px;top:446px;width:10px;height:469px;background:#cdd1d8"></div>
<div class="abs" style="left:1910px;top:446px;width:10px;height:137px;background:#999"></div>

<div class="abs nw ft" style="left:166px;top:935px;color:#333">Records per page:</div>
<div class="abs nw ft lk" style="left:256px;top:935px">10</div>
<div class="abs nw ft lk" style="left:271px;top:935px">25</div>
<div class="abs nw ft" style="left:287px;top:935px;color:#178bbb;font-weight:700">50</div>
<div class="abs nw ft lk" style="left:304px;top:935px">100</div>
<div class="abs nw ft lk" style="left:326px;top:935px">140</div>
<svg class="abs" style="left:166px;top:963px" width="11" height="9" viewBox="0 0 11 9"><path d="M5 1L1.5 4.5L5 8M10 1L6.5 4.5L10 8" stroke="#7dbdd8" stroke-width="2" fill="none"/></svg>
<svg class="abs" style="left:184px;top:963px" width="7" height="9" viewBox="0 0 7 9"><path d="M5.5 1L2 4.5L5.5 8" stroke="#7dbdd8" stroke-width="2" fill="none"/></svg>
<div class="abs nw ft" style="left:199px;top:961px;color:#333">Page</div>
<div class="abs nw" style="left:239px;top:960px;color:#999;font-size:13px;line-height:16px">1</div>
<div class="abs" style="left:239px;top:984px;width:53px;height:1px;background:#d5d5d5"></div>
<div class="abs nw ft" style="left:300px;top:961px;color:#333">of 3</div>
<svg class="abs" style="left:326px;top:963px" width="7" height="9" viewBox="0 0 7 9"><path d="M1.5 1L5 4.5L1.5 8" stroke="#178bbb" stroke-width="2" fill="none"/></svg>
<svg class="abs" style="left:341px;top:963px" width="11" height="9" viewBox="0 0 11 9"><path d="M1 1L4.5 4.5L1 8M6 1L9.5 4.5L6 8" stroke="#178bbb" stroke-width="2" fill="none"/></svg>
<div class="abs nw ft" style="left:166px;top:987px;color:#999">Showing 1 to 50 of 140 entries - <b>9 individuals</b></div>

<div class="abs" style="left:1703px;top:950px;width:70px;height:36px;background:#555;border-bottom:4px solid #464646;border-radius:4px 0 0 4px"></div>
<div class="abs" style="left:1773px;top:950px;width:70px;height:36px;background:#178bbb;border-bottom:4px solid #147599"></div>
<div class="abs nw" style="left:1703px;top:958px;width:70px;text-align:center;font-size:10.8px;font-weight:700;color:#fff;line-height:14px">CANCEL</div>
<div class="abs nw" style="left:1773px;top:958px;width:70px;text-align:center;font-size:10.8px;font-weight:700;color:#fff;line-height:14px">ACCEPT</div>

</body></html>
